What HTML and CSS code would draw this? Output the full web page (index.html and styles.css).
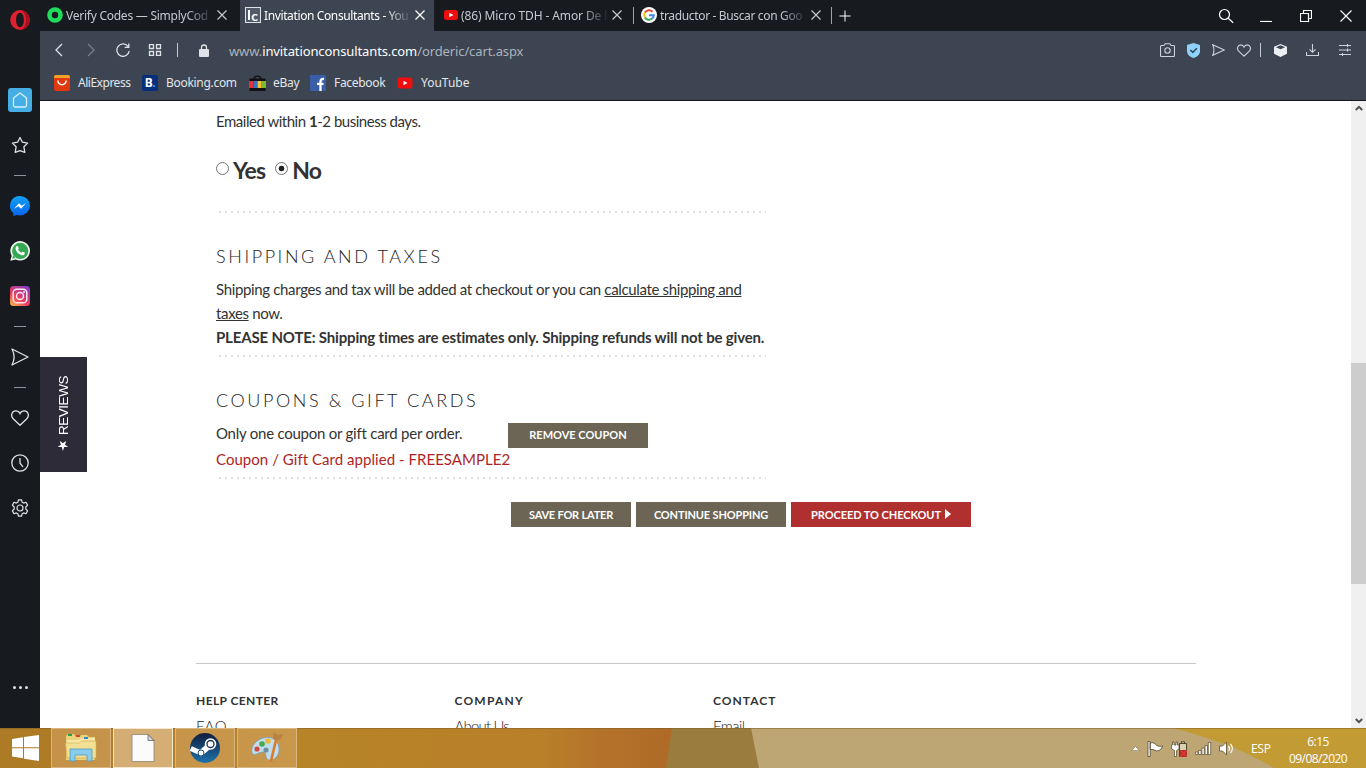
FILE: index.html
```html
<!DOCTYPE html>
<html lang="en">
<head>
    <meta charset="UTF-8">
    <meta name="viewport" content="width=device-width, initial-scale=1.0">
    <title>Invitation Consultants - Your Cart</title>
    <link rel="stylesheet" href="styles.css">
</head>
<body>
    <div class="window">
        <!-- Sidebar -->
        <div class="sidebar">
            <div class="side-logo">
                <svg width="20" height="20" viewBox="0 0 20 20"><path fill="#e0202e" fill-rule="evenodd" d="M10 0a9.8 10 0 1 0 0 20a9.8 10 0 1 0 0-20zM10 2.8c2.3 0 3.9 3 3.9 7.2s-1.6 7.2-3.9 7.2S6.1 14.2 6.1 10 7.7 2.8 10 2.8z"/><path fill="#a5121e" d="M10 0c5.4 0 9.800 4.500 9.800 10s-4.400 10-9.800 10c3.500-.8 6-4.600 6-10s-2.500-9.200-6-10z"/></svg>
            </div>
            <div class="side-item">
                <div class="home"><svg width="16" height="16" viewBox="0 0 16 16" fill="none" stroke="#d5f1ff" stroke-width="1.3" stroke-linejoin="round"><path d="M8 1L1.500 6v7.500a1.500 1.500 0 0 0 1.500 1.500h10a1.500 1.500 0 0 0 1.500-1.500V6z"/></svg></div>
            </div>
            <div class="side-item"><svg width="18" height="18" viewBox="0 0 18 18" fill="none" stroke="#dfe2e6" stroke-width="1.3" stroke-linejoin="round"><path d="M9 1.500l2.400 4.700 5.200.9-3.700 3.700.9 5.500L9 14.600l-4.800 1.700.9-5.500L1.400 7.100l5.200-.9z"/></svg></div>
            <div class="side-line"></div>
            <div class="side-item"><svg width="20" height="20" viewBox="0 0 20 20"><defs><linearGradient id="ms" x1="0" y1="0" x2="0" y2="1"><stop offset="0" stop-color="#12a0f5"/><stop offset="1" stop-color="#0a64ee"/></linearGradient></defs><path fill="url(#ms)" d="M10 0a10 9.700 0 0 1 0 19.400c-1.200 0-2.300-.2-3.300-.5L3.300 20v-3A9.700 9.700 0 0 1 10 0z"/><path fill="#fff" d="M3.900 12.800L9 7.300l2.700 2.400L16.100 7l-5 5.700-2.700-2.400z"/></svg></div>
            <div class="side-item"><svg width="20" height="20" viewBox="0 0 20 20"><path fill="#f0f6f0" d="M.3 19.800l1.400-5A9.800 9.800 0 1 1 5.600 18.500z"/><circle cx="10.200" cy="9.900" r="8.100" fill="#34a853"/><path fill="#34a853" d="M2.300 17.800l.8-3.300 2.300 2.500z"/><path fill="#fff" d="M6.300 5.400c.6-.7 1.400-.6 1.700.1l.8 1.700c.1.500-.7 1-.7 1.300.5 1.300 1.700 2.500 3.200 3.200.5 0 .9-1.100 1.400-1l1.900.9c.6.500.1 1.700-.7 2.300-1.400.9-3.500.1-5-1.100C6.500 10.900 4.400 7.600 6.300 5.400z"/></svg></div>
            <div class="side-item"><svg width="20" height="20" viewBox="0 0 20 20"><defs><linearGradient id="ig" x1=".1" y1="1" x2=".8" y2="0"><stop offset="0" stop-color="#fbb44a"/><stop offset=".4" stop-color="#ee3c5c"/><stop offset="1" stop-color="#8a3bc4"/></linearGradient></defs><rect width="20" height="20" rx="3.500" fill="url(#ig)"/><g fill="none" stroke="#ffeaf2" stroke-width="1.500"><rect x="3.200" y="3.200" width="13.600" height="13.600" rx="3.600"/><circle cx="10" cy="10" r="3.500"/></g><circle cx="14" cy="6" r=".9" fill="#fff"/></svg></div>
            <div class="side-line"></div>
            <div class="side-item"><svg width="18" height="18" viewBox="0 0 18 18" fill="none" stroke="#dfe2e6" stroke-width="1.3" stroke-linejoin="round"><path d="M1 1l16 8L1 17c2.600-5 2.600-11 0-16z"/></svg></div>
            <div class="side-line"></div>
            <div class="side-item"><svg width="18" height="16" viewBox="0 0 18 16" fill="none" stroke="#dfe2e6" stroke-width="1.3"><path d="M9 15.300L2.200 8.800C-.8 5.600 1 .8 4.700.8 6.800.8 8.300 2 9 3.600 9.700 2 11.200.8 13.300.8c3.700 0 5.500 4.800 2.500 8z"/></svg></div>
            <div class="side-item"><svg width="18" height="18" viewBox="0 0 18 18" fill="none" stroke="#dfe2e6" stroke-width="1.3"><circle cx="9" cy="9" r="8.200"/><path d="M9 4v5.200l3 3.600"/></svg></div>
            <div class="side-item"><svg width="18" height="18" viewBox="0 0 18 18" fill="none" stroke="#dfe2e6" stroke-width="1.2" stroke-linejoin="round"><path d="M7.400.8h3.200l.5 2.400 1.600.9 2.300-.8 1.600 2.800-1.800 1.900v2l1.800 1.900-1.600 2.800-2.300-.8-1.600.9-.5 2.400H7.400l-.5-2.400-1.600-.9-2.300.8-1.600-2.800L3.200 10V8L1.400 6.100 3 3.300l2.300.8 1.600-.9z"/><circle cx="9" cy="9" r="3"/></svg></div>
            <div class="side-more"><i></i><i></i><i></i></div>
        </div>

        <div class="main">
            <!-- Tabs -->
            <div class="tabs">
                <div class="tab tab-codes">
                    <svg width="16" height="16" viewBox="0 0 16 16"><circle cx="8" cy="8" r="5.500" fill="none" stroke="#1fdc5c" stroke-width="4.600"/></svg>
                    <span class="tab-title">Verify Codes — SimplyCod</span>
                    <svg class="close" width="10" height="10" viewBox="0 0 10 10"><path d="M.5.5l9 9M9.500.5l-9 9"/></svg>
                </div>
                <div class="tab active">
                    <span class="ic"><b></b><em>c</em></span>
                    <span class="tab-title">Invitation Consultants - You</span>
                    <svg class="close" width="10" height="10" viewBox="0 0 10 10"><path d="M.5.5l9 9M9.500.5l-9 9"/></svg>
                </div>
                <div class="tab tab-video">
                    <svg width="14" height="16" viewBox="0 0 14 16"><rect y="3" width="14" height="10" rx="2.500" fill="#f00d0d"/><path fill="#fff" d="M5.300 5.700v4.600L9.500 8z"/></svg>
                    <span class="tab-title">(86) Micro TDH - Amor De l</span>
                    <svg class="close" width="10" height="10" viewBox="0 0 10 10"><path d="M.5.5l9 9M9.500.5l-9 9"/></svg>
                </div>
                <div class="tab tab-google">
                    <svg width="16" height="16" viewBox="0 0 16 16"><circle cx="8" cy="8" r="8" fill="#fff"/><g fill="none" stroke-width="2"><path stroke="#ea4335" d="M3.900 5.600A4.800 4.800 0 0 1 11.500 4.700"/><path stroke="#fbbc05" d="M3.900 10.400a4.800 4.800 0 0 1 0-4.800"/><path stroke="#34a853" d="M11.200 11.600a4.800 4.800 0 0 1-7.300-1.200"/><path stroke="#4285f4" d="M8 8.200h4.800a4.800 4.800 0 0 1-1.600 3.400"/></g></svg>
                    <span class="tab-title">traductor - Buscar con Goo</span>
                    <svg class="close" width="10" height="10" viewBox="0 0 10 10"><path d="M.5.5l9 9M9.500.5l-9 9"/></svg>
                </div>
                <svg class="new-tab" width="12" height="12" viewBox="0 0 12 12"><path d="M6 .5v11M.5 6h11"/></svg>
                <div class="win-buttons">
                    <svg width="16" height="16" viewBox="0 0 16 16"><circle cx="6.500" cy="6.500" r="5"/><path d="M10.200 10.200l5 4.500"/></svg>
                    <svg width="12" height="12" viewBox="0 0 12 12"><path d="M0 11.500h12"/></svg>
                    <svg width="12" height="12" viewBox="0 0 12 12"><path d="M.5 3.500h8v8h-8zM3.500 3.500v-3h8v8h-3"/></svg>
                    <svg width="12" height="12" viewBox="0 0 12 12"><path d="M.5.5l11 11M11.500.5l-11 11"/></svg>
                </div>
            </div>

            <!-- Address bar -->
            <div class="toolbar">
                <svg width="8" height="14" viewBox="0 0 8 14"><path d="M7 1L1 7l6 6"/></svg>
                <svg class="dim" width="8" height="14" viewBox="0 0 8 14"><path d="M1 1l6 6-6 6"/></svg>
                <svg class="reload" width="14" height="14" viewBox="0 0 14 14"><path d="M12 3.400A6.200 6.200 0 1 0 13.200 8M12.800.5v3.800H8.700"/></svg>
                <svg class="speed-dial" width="14" height="12" viewBox="0 0 14 12"><path d="M1.500.5h4v4h-4zM8.500.5h4v4h-4zM1.500 7.500h4v4h-4zM8.500 7.500h4v4h-4z"/></svg>
                <div class="sep"></div>
                <svg class="lock" width="10" height="13" viewBox="0 0 10 13"><rect y="5" width="10" height="8" rx="1" fill="#dfe3e8" stroke="none"/><path d="M2.500 5.500V3.500a2.500 2.500 0 0 1 5 0v2"/></svg>
                <div class="url">www.<span class="host">invitationconsultants.com</span>/orderic/cart.aspx</div>
                <div class="tools">
                    <svg width="15" height="14" viewBox="0 0 15 14"><path d="M.5 3.500a1 1 0 0 1 1-1H4L5.200.7h4.600L11 2.500h2.500a1 1 0 0 1 1 1v9a1 1 0 0 1-1 1h-12a1 1 0 0 1-1-1z"/><circle cx="7.500" cy="7.500" r="2.700"/></svg>
                    <svg width="13" height="15" viewBox="0 0 13 15"><path fill="#90d3fa" stroke="none" d="M6.500 0L13 2v6c0 3.700-3 5.800-6.500 7C3 13.800 0 11.700 0 8V2z"/><path stroke="#2b4a60" stroke-width="1.600" d="M3.300 7l2.500 2.400L9.900 5.200"/></svg>
                    <svg width="13" height="12" viewBox="0 0 13 12"><path d="M.7.7L12.300 6 .7 11.300C2.400 7.700 2.400 4.300.7.7z"/></svg>
                    <svg width="14" height="13" viewBox="0 0 18 16" stroke-width="1.400"><path d="M9 15.300L2.200 8.800C-.8 5.600 1 .8 4.700.8 6.800.8 8.300 2 9 3.600 9.700 2 11.200.8 13.300.8c3.700 0 5.500 4.800 2.500 8z"/></svg>
                    <div class="sep"></div>
                    <svg class="cube" width="13" height="13" viewBox="0 0 13 13"><path fill="#eceff2" stroke="none" d="M6.500 0L13 2.800v7L6.500 13 0 9.800v-7z"/><path fill="#3d4652" stroke="none" d="M6.500 1.200l4.600 2-4.600 2.100-4.600-2.100z"/></svg>
                    <svg class="download" width="13" height="12" viewBox="0 0 13 12"><path d="M.5 8v3.500h12V8M6.500 0v8M3.500 5.300l3 3 3-3"/></svg>
                    <svg class="setup" width="12" height="12" viewBox="0 0 12 12"><path d="M0 1.500h12M0 6h12M0 10.500h12M8.500 0v3M3.500 9v3M8.500 4.500v3"/></svg>
                </div>
            </div>

            <!-- Bookmarks -->
            <div class="bookmarks">
                <div class="bookmark bm-ali"><svg width="16" height="16" viewBox="0 0 16 16"><rect width="16" height="16" rx="2" fill="#e0390e"/><path fill="#f5a12a" d="M2 0h12a2 2 0 0 1 2 2v1H0V2a2 2 0 0 1 2-2z"/><path fill="none" stroke="#fff" stroke-width="1.500" d="M3.800 5.500c.7 5.500 7.700 5.500 8.400 0"/></svg><span>AliExpress</span></div>
                <div class="bookmark bm-booking"><span class="booking-icon">B<i>.</i></span><span>Booking.com</span></div>
                <div class="bookmark bm-ebay"><svg width="17" height="16" viewBox="0 0 17 16"><path fill="none" stroke="#111" stroke-width="1.400" d="M5 4.500C5 0 12 0 12 4.500"/><path fill="#111" d="M.5 3.500h16V16H.5z"/><path fill="#e43137" d="M0 6h4.300v7H0z"/><path fill="#3575c8" d="M4.300 6h4.200v7H4.300z"/><path fill="#f4c430" d="M8.500 6h4.200v7H8.500z"/><path fill="#82b830" d="M12.700 6H17v7h-4.300z"/></svg><span>eBay</span></div>
                <div class="bookmark bm-fb"><svg width="16" height="16" viewBox="0 0 16 16"><path fill="#3b5da8" d="M0 0h16v16H0z"/><path fill="none" stroke="#fff" stroke-width="2.300" d="M10.500 16V6.500Q10.500 3.700 14 4M7 8.800h6.500"/></svg><span>Facebook</span></div>
                <div class="bookmark bm-yt"><svg width="16" height="16" viewBox="0 0 16 16"><rect x=".5" y="2.500" width="15" height="11" rx="2.800" fill="#f00d0d"/><path fill="#fff" d="M6.500 5.700v4.600L10.500 8z"/></svg><span>YouTube</span></div>
            </div>

            <!-- Page -->
            <div class="page">
                <div class="reviews"><span>★ REVIEWS</span></div>
                <div class="content">
                    <div class="cart">
                        <p class="emailed">Emailed within <b>1</b>-2 business days.</p>
                        <div class="choice">
                            <span class="radio"></span><label class="yes">Yes</label>
                            <span class="radio checked"></span><label>No</label>
                        </div>
                        <div class="dots"></div>

                        <h2>SHIPPING AND TAXES</h2>
                        <p class="shipping">Shipping charges and tax will be added at checkout or you can <a>calculate shipping and</a><br><a>taxes</a> now.</p>
                        <p class="note">PLEASE NOTE: Shipping times are estimates only. Shipping refunds will not be given.</p>
                        <div class="dots"></div>

                        <h2>COUPONS &amp; GIFT CARDS</h2>
                        <div class="coupon">
                            <p>Only one coupon or gift card per order.</p>
                            <div class="button remove">REMOVE COUPON</div>
                        </div>
                        <p class="applied">Coupon / Gift Card applied - FREESAMPLE2</p>
                        <div class="dots"></div>
                    </div>

                    <div class="actions">
                        <div class="button save">SAVE FOR LATER</div>
                        <div class="button continue">CONTINUE SHOPPING</div>
                        <div class="button checkout">PROCEED TO CHECKOUT<i></i></div>
                    </div>

                    <div class="footer">
                        <div class="help"><h3>HELP CENTER</h3><p>FAQ</p></div>
                        <div class="company"><h3>COMPANY</h3><p>About Us</p></div>
                        <div class="contact"><h3>CONTACT</h3><p>Email</p></div>
                    </div>
                </div>
                <div class="scrollbar">
                    <svg width="8" height="6" viewBox="0 0 8 6"><path d="M.8 5L4 1.800 7.200 5"/></svg>
                    <div class="thumb"></div>
                    <svg width="8" height="6" viewBox="0 0 8 6"><path d="M.8 1L4 4.200 7.200 1"/></svg>
                </div>
            </div>
        </div>
    </div>

    <!-- Taskbar -->
    <div class="taskbar">
        <svg class="wallpaper" width="1366" height="40" viewBox="0 0 1366 40">
            <defs><linearGradient id="wp" x1="0" x2="1" y1="0" y2="0"><stop offset="0" stop-color="#ad7a25"/><stop offset=".45" stop-color="#b78428"/><stop offset=".8" stop-color="#b97f29"/><stop offset=".88" stop-color="#b4732a"/><stop offset="1" stop-color="#ae6926"/></linearGradient></defs>
            <path fill="url(#wp)" d="M0 0h680v40H0z"/>
            <path fill="#9b7c3f" d="M672 0h90v40h-96z"/>
            <path fill="#bda674" d="M751 0h615v40H759z"/>
            <path fill="#c39b35" d="M1172 0h194v40h-92c-30-18-62-30-102-40z"/>
            <path fill="#7c5c20" opacity=".5" d="M0 0h1366v1H0z"/>
        </svg>
        <div class="start"><svg width="27" height="26" viewBox="0 0 27 26"><path fill="#fff" d="M0 4l11-1.800v10H0zM12 2l15-2v12.200H12zM0 13.200h11v10L0 21.500zM12 13.200h15V26l-15-2.300z"/></svg></div>
        <div class="task"><svg width="34" height="32" viewBox="0 0 34 32"><path fill="#e9d27c" d="M2 4l2-2h6l2 3h4l1-2h6l2 2h6v23H2z"/><path fill="#f6e7a4" d="M3 8h12l2-2h14v20H3z"/><path fill="#f3df91" stroke="#cfae52" stroke-width=".6" d="M1.500 11h14l2-2h14.500v17H3z"/><path fill="#28a146" d="M4 2h4v2H4z"/><path fill="#d8452f" d="M12 3h4v2h-4z"/><path fill="#2f86c8" d="M20 5h4v2h-4z"/><path fill="#8accec" stroke="#4d9cc8" stroke-width=".8" d="M6 17h22v12h-5v-6H11v6H6z"/></svg></div>
        <div class="task current"><svg width="24" height="28" viewBox="0 0 24 28"><path fill="#fbfbfb" stroke="#8b8175" stroke-width=".8" d="M1 .5h16l6 6v21H1z"/><path fill="#d5d5d5" stroke="#666" stroke-width=".8" d="M17 .5v6h6z"/></svg></div>
        <div class="task"><svg width="30" height="30" viewBox="0 0 30 30"><defs><linearGradient id="st" x1="0" y1="0" x2="0" y2="1"><stop offset="0" stop-color="#101d3c"/><stop offset="1" stop-color="#1c72ae"/></linearGradient></defs><circle cx="15" cy="15" r="15" fill="url(#st)"/><path stroke="#fff" stroke-width="6" stroke-linecap="round" d="M11 20l9-8"/><path stroke="#fff" stroke-width="5" d="M.8 15.500L11 20"/><circle cx="20.500" cy="11" r="5.800" fill="#fff"/><circle cx="20.500" cy="11" r="3.500" fill="none" stroke="#193052" stroke-width="1.300"/><circle cx="11" cy="20" r="3" fill="none" stroke="#1c4d7c"/></svg></div>
        <div class="task"><svg width="34" height="32" viewBox="0 0 34 32"><path fill="#c1dcec" stroke="#7a9cb3" stroke-width=".8" d="M13 6C23 3 30 10 29 19c-1 8-9 11-12 8-2-3 0-7-4-7-5 0-8 5-11 1C0 15 6 8 13 6z"/><circle cx="7" cy="17" r="2.600" fill="#cf4a3d"/><circle cx="12" cy="12" r="2.800" fill="#46a94d"/><circle cx="18" cy="9" r="2.800" fill="#e9b93b"/><circle cx="16" cy="18" r="2.600" fill="#6e93a0"/><path stroke="#d97c28" stroke-width="2.600" stroke-linecap="round" d="M26 8l-5 21"/><path fill="#b98243" d="M25 8c-3-2-2-5-1-8l4 3 5-1c-1 4-3 7-8 6z"/></svg></div>
        <div class="tray">
            <svg width="9" height="5" viewBox="0 0 9 5"><path fill="#fff" stroke="#77653f" stroke-width=".6" d="M.5 4.700l4-4.400 4 4.400z"/></svg>
            <svg width="17" height="16" viewBox="0 0 17 16"><path fill="#fff" stroke="#4f4632" stroke-width=".8" d="M1 .5h2.200V15.500H1zM3.200 2c3-1 5 .5 6.500 2.500 2 1 4 1 6 .5-1 2.500-2 4.500-6 5-2-1-4-2-6.500-1.500z"/></svg>
            <svg width="17" height="16" viewBox="0 0 17 16"><path fill="#ddd0b0" stroke="#4f4632" d="M8.500 2.500h7v13h-7zM10.500.8h3v1.700h-3z"/><path fill="#fff" stroke="#4f4632" stroke-width=".7" d="M1.500 1h1.500v3h2V1h1.500v3H8v4L5.500 9.500v6h-2v-6L.5 8V4h1z"/><path fill="#a8322c" d="M9 9h7v7H9z"/><path stroke="#e03a35" stroke-width="1.500" d="M9.500 9.500l6 6M15.500 9.500l-6 6"/></svg>
            <svg width="17" height="13" viewBox="0 0 17 13"><path fill="#fff" stroke="#5a4c2c" stroke-width=".7" d="M.5 10h2.400v2.500H.5zM3.700 8.500h2.400v4H3.700zM6.900 6h2.400v6.500H6.900zM10.100 3.500h2.400v9h-2.400zM13.300.5h2.400v12h-2.400z"/></svg>
            <svg width="16" height="15" viewBox="0 0 16 15"><path fill="#fff" stroke="#5a4c2c" stroke-width=".8" d="M.5 5h3L7.500 1v13l-4-4h-3z"/><path fill="none" stroke="#fff" stroke-width="1.200" d="M9.500 5c1.300 1.500 1.300 3.500 0 5M11.500 3c2.300 2.800 2.300 6.200 0 9"/></svg>
        </div>
        <div class="lang">ESP</div>
        <div class="clock"><span>6:15</span><span>09/08/2020</span></div>
    </div>
</body>
</html>
```

FILE: styles.css
```css
* {
    box-sizing: border-box;
}
body {
    margin: 0;
    width: 1366px;
    height: 768px;
    overflow: hidden;
    display: flex;
    flex-direction: column;
    font-family: Lato, sans-serif;
    color: #333;
}
svg {
    display: block;
    flex: none;
}
p, h2, h3 {
    margin: 0;
}
.window {
    display: flex;
    height: 728px;
}

/* sidebar */
.sidebar {
    width: 40px;
    background: #171b20;
    display: flex;
    flex-direction: column;
    align-items: center;
}
.side-logo {
    height: 77.5px;
    padding-top: 10px;
}
.side-item {
    height: 45px;
    display: flex;
    align-items: center;
    justify-content: center;
}
.home {
    width: 24px;
    height: 24px;
    border-radius: 3px;
    background: #45aee4;
    display: flex;
    align-items: center;
    justify-content: center;
}
.side-line {
    width: 12px;
    height: 1px;
    margin: 7px 0 8px;
    background: #8d939c;
}
.side-more {
    display: flex;
    gap: 3px;
    margin-top: auto;
    margin-bottom: 39px;
}
.side-more i {
    width: 3px;
    height: 3px;
    border-radius: 50%;
    background: #dfe2e6;
}

/* browser */
.main {
    flex: 1;
    display: flex;
    flex-direction: column;
    background: #3c4551;
}
.tabs {
    height: 31px;
    display: flex;
    align-items: center;
    background: #171b20;
    font-family: "Noto Sans", sans-serif;
    font-size: 12px;
    letter-spacing: -0.25px;
    color: #c5c9ce;
}
.tab {
    height: 31px;
    display: flex;
    align-items: center;
    width: 200px;
    padding: 0 13px 1px 7px;
}
.tab.active {
    width: 194px;
    padding: 0 9px 1px 5px;
    background: #3c4551;
    color: #fff;
    letter-spacing: -0.38px;
}
.tab-video {
    width: 200px;
    padding: 0 12px 1px 10px;
    letter-spacing: -0.12px;
    background: linear-gradient(#9aa3b0, #9aa3b0) right 7px / 1px 17px no-repeat;
}
.tab-google {
    width: 198px;
    padding: 0 11px 1px 7px;
    letter-spacing: -0.35px;
    background: linear-gradient(#9aa3b0, #9aa3b0) right 7px / 1px 17px no-repeat;
}
.tab-title {
    flex: 1;
    margin-left: 3px;
    white-space: nowrap;
    -webkit-mask-image: linear-gradient(to right, #000 80%, transparent 98%);
    mask-image: linear-gradient(to right, #000 80%, transparent 98%);
}
.tab svg.close {
    fill: none;
    stroke: #c5c9ce;
    stroke-width: 1.2;
}
.tab.active svg.close {
    stroke: #fff;
}
.ic {
    width: 16px;
    height: 16px;
    border: 1px solid #dfe2e6;
    background: #525b69;
    display: flex;
    align-items: flex-end;
    justify-content: center;
    gap: 1px;
    padding-bottom: 2px;
}
.ic b {
    width: 2px;
    height: 10px;
    background: #fff;
}
.ic em {
    font: bold 14px/9px Lato, sans-serif;
    color: #fff;
}
.new-tab {
    margin-left: 7px;
    stroke: #fff;
}
.win-buttons {
    margin-left: auto;
    margin-right: 14px;
    display: flex;
    align-items: center;
    gap: 28px;
    fill: none;
    stroke: #fff;
    stroke-width: 1.2;
}
.win-buttons svg:first-child {
    margin-right: -2px;
}
.toolbar {
    height: 38px;
    display: flex;
    align-items: center;
    padding: 0 15px;
    fill: none;
    stroke: #dfe3e8;
    stroke-width: 1.3;
}
.toolbar .dim {
    margin-left: 24px;
    stroke: #75808d;
}
.toolbar .reload {
    margin-left: 21px;
}
.toolbar .speed-dial {
    margin-left: 18px;
}
.toolbar > .sep {
    margin-left: 15px;
}
.toolbar .lock {
    margin-left: 21px;
}
.sep {
    width: 1px;
    height: 14px;
    background: #c5cbd3;
}
.url {
    margin-left: 20px;
    padding-top: 1px;
    font-family: "Noto Sans", sans-serif;
    font-size: 13px;
    letter-spacing: -0.11px;
    color: #aab3be;
}
.url .host {
    color: #fff;
}
.tools {
    margin-left: auto;
    display: flex;
    align-items: center;
    gap: 12px;
    stroke: #ccd3db;
    stroke-width: 1.1;
}
.tools .sep {
    margin-left: -3px;
}
.tools .cube {
    margin-left: 1px;
}
.tools .download {
    margin-left: 7px;
}
.tools .setup {
    margin-left: 8px;
}
.bookmarks {
    height: 31px;
    display: flex;
    align-items: center;
    padding: 0 0 4px 14px;
    font-family: "Noto Sans", sans-serif;
    font-size: 12px;
    letter-spacing: -0.3px;
    color: #e3e6ea;
}
.bookmark {
    display: flex;
    align-items: center;
    gap: 8px;
}
.bm-ali {
    width: 88px;
    letter-spacing: -0.48px;
}
.bm-booking { width: 107px; }
.bm-ebay {
    width: 61px;
    gap: 7px;
}
.bm-fb { width: 87px; }
.bm-yt { letter-spacing: 0; }
.booking-icon {
    width: 16px;
    height: 16px;
    border-radius: 2px;
    background: #06307c;
    color: #fff;
    font: bold 12px/16px "Noto Sans", sans-serif;
    text-align: center;
}
.booking-icon i {
    font-style: normal;
    color: #33a5f5;
}

/* page */
.page {
    position: relative;
    flex: 1;
    min-height: 0;
    overflow: hidden;
    display: flex;
    border-top: 1px solid #15171f;
    background: #fff;
}
.content {
    flex: 1;
    padding-left: 156px;
}
.reviews {
    position: absolute;
    left: 0;
    top: 256px;
    width: 47px;
    height: 115px;
    background: #2e2b38;
    color: #fff;
    display: flex;
    align-items: center;
    justify-content: center;
}
.reviews span {
    writing-mode: vertical-rl;
    transform: rotate(180deg);
    font: 13.5px/16px "Liberation Sans", "DejaVu Sans", sans-serif;
    letter-spacing: -0.45px;
}
.cart {
    width: 570px;
    padding: 8px 0 0 20px;
    font-size: 15px;
    line-height: 24px;
    white-space: nowrap;
}
.cart a {
    text-decoration: underline;
}
.emailed {
    letter-spacing: -0.48px;
}
.shipping {
    letter-spacing: -0.35px;
}
.choice {
    height: 54px;
    margin-bottom: 24px;
    padding-top: 19px;
    display: flex;
    align-items: center;
    font-size: 23px;
    font-weight: bold;
    letter-spacing: -0.8px;
}
.radio {
    width: 13px;
    height: 13px;
    margin: 0 4px 3px 0;
    border: 1px solid #767676;
    border-radius: 50%;
}
.yes + .radio {
    margin-left: 10px;
}
.radio.checked {
    background: radial-gradient(circle, #222 2.5px, #fff 3.2px);
}
.dots {
    height: 2px;
    margin-left: 3px;
    width: 547px;
    background: repeating-linear-gradient(to right, #dedede 0 2px, transparent 2px 6px);
}
.cart h2 {
    height: 64px;
    padding-top: 31px;
    font-size: 18px;
    font-weight: 300;
    letter-spacing: 2.58px;
    color: #222;
}
.note {
    height: 30px;
    font-weight: bold;
    letter-spacing: -0.17px;
}
.coupon {
    display: flex;
    height: 26px;
}
.coupon p {
    width: 292px;
    letter-spacing: -0.24px;
}
.applied {
    height: 30px;
    letter-spacing: 0.04px;
    color: #b01f24;
}
.button {
    height: 25px;
    padding-bottom: 1px;
    display: flex;
    align-items: center;
    justify-content: center;
    background: #6c6555;
    color: #fff;
    font-size: 11px;
    font-weight: bold;
    white-space: nowrap;
}
.remove {
    width: 140px;
    margin-top: 2px;
}
.save {
    width: 120px;
    letter-spacing: -0.2px;
}
.continue {
    width: 150px;
    letter-spacing: -0.15px;
}
.checkout {
    width: 180px;
    gap: 4px;
    letter-spacing: -0.06px;
    background: #b0302f;
}
.checkout i {
    margin-bottom: 1px;
    border-left: 6px solid #fff;
    border-top: 5px solid transparent;
    border-bottom: 5px solid transparent;
}
.actions {
    display: flex;
    gap: 5px;
    margin: 23px 0 136px 315px;
}
.footer {
    width: 1000px;
    border-top: 1px solid #c9c9c9;
    padding-top: 25px;
    display: flex;
    line-height: 24px;
    white-space: nowrap;
}
.footer div {
    width: 258.5px;
}
.footer h3 {
    font-size: 12px;
}
.footer p {
    margin-top: 1px;
    font-size: 15px;
    font-weight: 300;
    color: #222;
}
.help h3 { letter-spacing: 0.4px; }
.company h3 { letter-spacing: 1.2px; }
.contact h3 { letter-spacing: 1.05px; }
.help p { letter-spacing: 0.8px; }
.company p { letter-spacing: -0.8px; }
.contact p { letter-spacing: -0.6px; }
.scrollbar {
    width: 15px;
    background: #f0f0f0;
    display: flex;
    flex-direction: column;
    align-items: center;
    padding: 4px 0;
    fill: none;
    stroke: #505050;
    stroke-width: 2;
}
.thumb {
    width: 15px;
    height: 221px;
    margin-top: 252px;
    margin-bottom: auto;
    background: #cdcdcd;
}

/* taskbar */
.taskbar {
    position: relative;
    height: 40px;
    display: flex;
    align-items: center;
    color: #fff;
    font-family: "Open Sans", sans-serif;
    font-size: 12px;
}
.taskbar > div {
    position: relative;
}
.wallpaper {
    position: absolute;
    left: 0;
    top: 0;
}
.start {
    width: 51px;
    padding-left: 12px;
}
.task {
    width: 60px;
    height: 40px;
    margin-right: 2px;
    display: flex;
    align-items: center;
    justify-content: center;
    border: 1px solid #d9b680;
    background: rgba(235, 190, 140, 0.35);
}
.task.current {
    border-color: #f6e7cf;
    background: rgba(235, 205, 170, 0.6);
}
.tray {
    margin-left: auto;
    padding-top: 1px;
    display: flex;
    align-items: center;
    gap: 7px;
}
.lang {
    margin-left: 16px;
    width: 20px;
    letter-spacing: -0.3px;
}
.clock {
    margin-left: 18px;
    margin-right: 19px;
    padding-top: 3px;
    width: 58px;
    display: flex;
    flex-direction: column;
    align-items: center;
    line-height: 17px;
    letter-spacing: -0.55px;
}
```
